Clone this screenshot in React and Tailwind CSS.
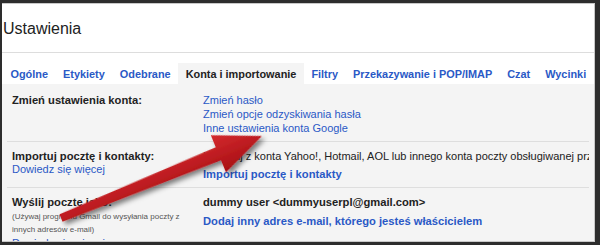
import React from "react";

const tabs = [
  "Ogólne",
  "Etykiety",
  "Odebrane",
  "Konta i importowanie",
  "Filtry",
  "Przekazywanie i POP/IMAP",
  "Czat",
  "Wycinki",
];

function Arrow() {
  return (
    <svg className="absolute inset-0 pointer-events-none" width="600" height="245">
      <defs>
        <linearGradient id="red" x1="0" y1="0" x2="0" y2="1">
          <stop offset="0" stopColor="#d42a2e" />
          <stop offset="1" stopColor="#a80f14" />
        </linearGradient>
        <filter id="shadow" x="-20%" y="-50%" width="140%" height="200%">
          <feDropShadow dx="2" dy="4" stdDeviation="2.5" floodColor="#000" floodOpacity="0.5" />
        </filter>
      </defs>
      <g transform="translate(61,218) rotate(-22.2)" filter="url(#shadow)">
        <polygon
          points="0,-4 170,-7 170,-20 217,0 170,20 170,7 0,4"
          fill="url(#red)"
        />
      </g>
    </svg>
  );
}

export default function App() {
  return (
    <div className="relative w-[600px] h-[245px] bg-[#2d2d2d] pt-[3px] pl-[2px] pr-[5px] pb-[3px] font-['Liberation_Sans',Arial,sans-serif] text-[#222]">
      <div className="flex flex-col h-full overflow-hidden bg-white border-t border-r border-b border-[#c8c8c8]">
        <div className="h-[49px] shrink-0 flex items-center pl-[1px] pt-[2px] text-[16px] border-b border-[#dddddd]">
          Ustawienia
        </div>
        <div className="h-[31px] shrink-0 flex items-end pl-[1px]">
          {tabs.map((t, i) => (
            <div
              key={t}
              className={
                i === 3
                  ? "h-[21px] flex items-center pt-[2px] px-[7.5px] text-[10.9px] font-bold whitespace-nowrap bg-[#f4f4f4] text-[#222]"
                  : "h-[21px] flex items-center pt-[2px] px-[7.5px] text-[10.9px] font-bold whitespace-nowrap text-[#2a59c6]"
              }
            >
              {t}
            </div>
          ))}
        </div>
        <div className="flex-1 bg-[#f4f4f4] px-[5px]">
          <div className="grid grid-cols-[191px_1fr] pl-[5px] pt-[9px] pb-[6px] border-b border-[#dedede]">
            <div className="text-[11.2px] font-bold leading-[14px]">Zmień ustawienia konta:</div>
            <div className="flex flex-col text-[11px] leading-[14px] text-[#2a59c6]">
              <span>Zmień hasło</span>
              <span>Zmień opcje odzyskiwania hasła</span>
              <span>Inne ustawienia konta Google</span>
            </div>
          </div>
          <div className="grid grid-cols-[191px_1fr] pl-[5px] pt-[7px] pb-[6px] border-b border-[#dedede]">
            <div className="flex flex-col">
              <span className="text-[11.2px] font-bold leading-[14px]">Importuj pocztę i kontakty:</span>
              <span className="text-[11px] leading-[12px] text-[#2a59c6]">Dowiedz się więcej</span>
            </div>
            <div className="flex flex-col min-w-0 overflow-hidden">
              <span className="text-[11px] leading-[14px] whitespace-nowrap">
                Importuj z konta Yahoo!, Hotmail, AOL lub innego konta poczty obsługiwanej przez POP3.
              </span>
              <span className="mt-[4px] text-[11.2px] font-bold leading-[14px] text-[#2a59c6]">
                Importuj pocztę i kontakty
              </span>
            </div>
          </div>
          <div className="grid grid-cols-[191px_1fr] pl-[5px] pt-[7px]">
            <div className="flex flex-col">
              <span className="text-[11.2px] font-bold leading-[14px]">Wyślij pocztę jako:</span>
              <span className="mt-[1px] text-[8px] leading-[13px] text-[#555]">
                (Używaj programu Gmail do wysyłania poczty z innych adresów e-mail)
              </span>
              <span className="text-[11px] leading-[14px] text-[#2a59c6]">Dowiedz się więcej</span>
            </div>
            <div className="flex flex-col">
              <span className="text-[11.2px] font-bold leading-[14px]">
                dummy user &lt;dummyuserpl@gmail.com&gt;
              </span>
              <span className="mt-[5px] text-[11.2px] font-bold leading-[14px] text-[#2a59c6]">
                Dodaj inny adres e-mail, którego jesteś właścicielem
              </span>
            </div>
          </div>
        </div>
      </div>
      <Arrow />
    </div>
  );
}
